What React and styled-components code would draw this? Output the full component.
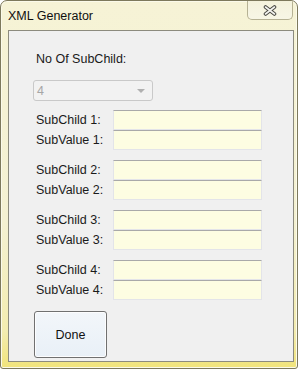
import React from 'react';
import styled, { createGlobalStyle } from 'styled-components';

const GlobalStyle = createGlobalStyle`
  html, body {
    margin: 0;
    padding: 0;
    background: #ffffff;
  }
  body {
    font-family: "Liberation Sans", Arial, sans-serif;
  }
`;

const Window = styled.div`
  width: 296px;
  height: 367px;
  border: 1px solid #7d795c;
  border-radius: 7px 7px 3px 3px;
  background: linear-gradient(180deg, #f6f3d6 0%, #f4f1d2 60%, #f3ecb0 90%, #f1e47a 100%);
  box-shadow: inset 0 0 0 1px #fbfaea;
  display: flex;
  flex-direction: column;
  overflow: hidden;
`;

const TitleBar = styled.div`
  height: 29px;
  flex-shrink: 0;
  display: flex;
  align-items: flex-start;
  justify-content: space-between;
  padding-left: 7px;
`;

const Title = styled.span`
  margin-top: 8px;
  font-size: 12.5px;
  color: #101010;
`;

const CloseButton = styled.div`
  width: 44px;
  height: 18px;
  margin-right: 4px;
  border: 1px solid #b6b294;
  border-top: none;
  border-radius: 0 0 5px 5px;
  background: linear-gradient(180deg, #f4f2dc 0%, #f7f6e6 100%);
  display: flex;
  align-items: center;
  justify-content: center;
`;

const Client = styled.div`
  margin: 0 3px 0 7px;
  height: 332px;
  flex-shrink: 0;
  box-sizing: border-box;
  border: 1px solid #8c8b7e;
  background: #f0f0f0;
  padding: 20px 0 0 24px;
  display: flex;
  flex-direction: column;
  align-items: flex-start;
  font-size: 12.5px;
  color: #1a1a1a;
`;

const Heading = styled.div`
  padding-left: 3px;
  height: 16px;
  line-height: 16px;
`;

const Combo = styled.div`
  margin-top: 13px;
  width: 120px;
  height: 21px;
  border: 1px solid #c9c9c9;
  border-radius: 3px;
  background: #f2f2f2;
  display: flex;
  align-items: center;
  justify-content: space-between;
  padding: 0 7px 0 3px;
  box-sizing: border-box;
  color: #a6a6a6;
`;

const Arrow = styled.span`
  width: 0;
  height: 0;
  border-left: 4px solid transparent;
  border-right: 4px solid transparent;
  border-top: 4px solid #b0b0b0;
`;

const Groups = styled.div`
  margin-top: 9px;
  display: flex;
  flex-direction: column;
  gap: 10px;
`;

const Group = styled.div`
  display: grid;
  grid-template-columns: 80px 149px;
  grid-auto-rows: 20px;
  align-items: center;
`;

const Label = styled.span`
  padding-left: 3px;
`;

const TextBox = styled.div`
  height: 20px;
  box-sizing: border-box;
  border: 1px solid #e3e4e9;
  border-top-color: #a9a9a9;
  background: #fdfde2;
`;

const Done = styled.button`
  margin-top: 11px;
  margin-left: 1px;
  width: 73px;
  height: 47px;
  border: 1px solid #707070;
  border-radius: 3px;
  background: linear-gradient(180deg, #f2f6fa 0%, #e9f0f7 100%);
  box-shadow: inset 0 0 0 1px #fdfdfe;
  font-family: "Liberation Sans", Arial, sans-serif;
  font-size: 12.5px;
  color: #111;
  padding: 0;
`;

const BottomFrame = styled.div`
  flex: 1;
`;

const rows = [1, 2, 3, 4];

export default function App() {
  return (
    <>
      <GlobalStyle />
      <Window>
        <TitleBar>
          <Title>XML Generator</Title>
          <CloseButton>
            <svg width="14" height="11" viewBox="0 0 14 11">
              <path
                d="M2.5 2 L11.5 9 M11.5 2 L2.5 9"
                stroke="#4a4a44"
                strokeWidth="3.6"
                strokeLinecap="round"
              />
              <path
                d="M2.5 2 L11.5 9 M11.5 2 L2.5 9"
                stroke="#f4f4f0"
                strokeWidth="1.6"
                strokeLinecap="round"
              />
            </svg>
          </CloseButton>
        </TitleBar>
        <Client>
          <Heading>No Of SubChild:</Heading>
          <Combo>
            <span>4</span>
            <Arrow />
          </Combo>
          <Groups>
            {rows.map((n) => (
              <Group key={n}>
                <Label>SubChild {n}:</Label>
                <TextBox />
                <Label>SubValue {n}:</Label>
                <TextBox />
              </Group>
            ))}
          </Groups>
          <Done>Done</Done>
        </Client>
        <BottomFrame />
      </Window>
    </>
  );
}
